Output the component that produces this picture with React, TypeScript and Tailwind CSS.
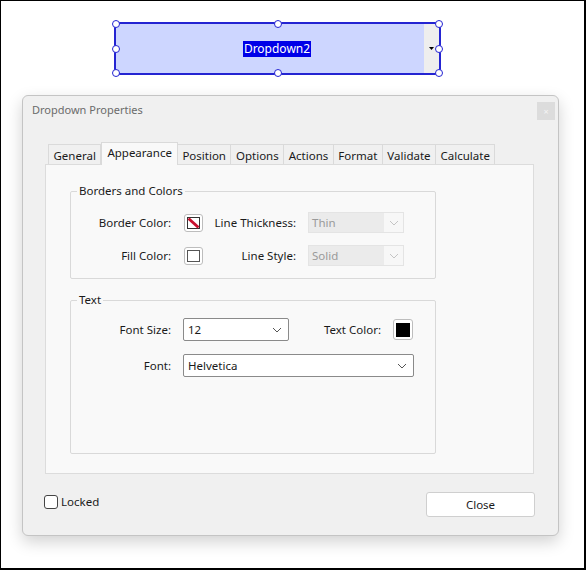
import React from 'react';

const TABS = ['General', 'Appearance', 'Position', 'Options', 'Actions', 'Format', 'Validate', 'Calculate'];

const HANDLES: [string, string][] = [
  ['left-0', 'top-0'],
  ['left-1/2', 'top-0'],
  ['left-full', 'top-0'],
  ['left-0', 'top-1/2'],
  ['left-full', 'top-1/2'],
  ['left-0', 'top-full'],
  ['left-1/2', 'top-full'],
  ['left-full', 'top-full'],
];

const Chevron: React.FC<{ light?: boolean }> = ({ light }) => (
  <svg width="10" height="6" viewBox="0 0 10 6" className={light ? 'text-[#c4c4c4]' : 'text-[#555]'}>
    <path d="M1 1l4 4 4-4" fill="none" stroke="currentColor" strokeWidth="1" />
  </svg>
);

const Select: React.FC<{ value: string; width: string; disabled?: boolean }> = ({ value, width, disabled }) =>
  disabled ? (
    <div className={`${width} flex h-[21px] items-center border border-[#e4e4e4] bg-[#f7f7f7]`}>
      <div className="flex h-full flex-1 items-center bg-[#ebebeb] pl-[3px] text-[#9a9a9a]">{value}</div>
      <div className="flex w-[19px] justify-center">
        <Chevron light />
      </div>
    </div>
  ) : (
    <div className={`${width} flex h-[23px] items-center justify-between rounded-[2px] border border-[#8a8a8a] bg-white pl-[4px] pr-[6px]`}>
      <span>{value}</span>
      <Chevron />
    </div>
  );

const Swatch: React.FC<{ kind: 'none' | 'white' }> = ({ kind }) => (
  <div className="flex h-[18px] w-[19px] items-center justify-center rounded-[3px] border border-[#bdbdbd] bg-white">
    {kind === 'none' ? (
      <svg width="13" height="12" viewBox="0 0 13 12">
        <rect x="0.5" y="0.5" width="12" height="11" fill="#fff" stroke="#333" />
        <path d="M1.5 1.5l10 9" stroke="#c8102e" strokeWidth="3" />
      </svg>
    ) : (
      <div className="h-[12px] w-[13px] border border-[#555] bg-white" />
    )}
  </div>
);

const Group: React.FC<{ title: string; className: string; children: React.ReactNode }> = ({ title, className, children }) => (
  <fieldset className={`${className} rounded-[2px] border border-[#d9d9d9]`}>
    <legend className="ml-[6px] px-[2px] leading-[14px]">{title}</legend>
    {children}
  </fieldset>
);

export default function App() {
  return (
    <div
      className="h-[570px] w-[586px] overflow-hidden border-l border-t border-r-2 border-b-2 border-black bg-white text-[11.5px] text-[#1a1a1a]"
      style={{ fontFamily: '"Noto Sans", "Open Sans", sans-serif' }}
    >
      {/* selected dropdown field */}
      <div className="relative ml-[113px] mt-[21px] h-[53px] w-[327px] border-2 border-[#2424d2] bg-[#cdd6ff]">
        <div className="flex h-full">
          <div className="flex flex-1 items-center justify-center pl-[14px]">
            <span className="bg-[#0000e8] px-px text-[12px] leading-[16px] text-white">Dropdown2</span>
          </div>
          <div className="flex w-[15px] items-center justify-center bg-[#eeeeee]">
            <svg width="5" height="3" viewBox="0 0 5 3">
              <path d="M0 0h5L2.5 3z" fill="#000" />
            </svg>
          </div>
        </div>
        {HANDLES.map(([x, y]) => (
          <span
            key={x + y}
            className={`absolute ${x} ${y} h-[8px] w-[8px] -translate-x-1/2 -translate-y-1/2 rounded-full border-[1.5px] border-[#2424d2] bg-white`}
          />
        ))}
      </div>

      {/* properties dialog */}
      <div className="ml-[21px] mt-[20px] h-[441px] w-[537px] rounded-[6px] border border-[#c4c4c4] bg-[#f0f0f0] shadow-[0_6px_16px_rgba(0,0,0,0.18)]">
        <div className="flex items-start justify-between pl-[9px] pr-[3px] pt-[6px]">
          <span className="text-[11px] text-[#6b6b6b]">Dropdown Properties</span>
          <div className="flex h-[18px] w-[18px] items-center justify-center bg-[#dcdcdc] text-[9px] leading-none text-[#f5f5f5]">×</div>
        </div>

        <div className="ml-[22px] mt-[22px] w-[489px]">
          <div className="flex items-end pl-[3px]">
            {TABS.map((t) =>
              t === 'Appearance' ? (
                <div key={t} className="-mb-px h-[23px] border border-b-0 border-[#dadada] bg-[#f9f9f9] px-[5px] pt-[1px]">
                  {t}
                </div>
              ) : (
                <div key={t} className="-ml-px h-[20px] border border-b-0 border-[#dadada] bg-[#f0f0f0] px-[4.5px] pt-[2px] first:ml-0">
                  {t}
                </div>
              ),
            )}
          </div>

          <div className="flex h-[310px] flex-col gap-[14px] border border-[#dcdcdc] bg-[#f9f9f9] px-[24px] pt-[19px]">
            <Group title="Borders and Colors" className="h-[95px] w-[366px]">
              <div className="mt-[14px] flex flex-col gap-[12px]">
                <div className="flex items-center">
                  <span className="w-[100px] text-right">Border Color:</span>
                  <div className="ml-[13px]">
                    <Swatch kind="none" />
                  </div>
                  <span className="w-[93px] text-right">Line Thickness:</span>
                  <div className="ml-[12px]">
                    <Select value="Thin" width="w-[96px]" disabled />
                  </div>
                </div>
                <div className="flex items-center">
                  <span className="w-[100px] text-right">Fill Color:</span>
                  <div className="ml-[13px]">
                    <Swatch kind="white" />
                  </div>
                  <span className="w-[93px] text-right">Line Style:</span>
                  <div className="ml-[12px]">
                    <Select value="Solid" width="w-[96px]" disabled />
                  </div>
                </div>
              </div>
            </Group>

            <Group title="Text" className="h-[161px] w-[366px]">
              <div className="mt-[11px] flex flex-col gap-[13px]">
                <div className="flex items-center">
                  <span className="w-[100px] text-right">Font Size:</span>
                  <div className="ml-[12px]">
                    <Select value="12" width="w-[106px]" />
                  </div>
                  <span className="w-[92px] text-right">Text Color:</span>
                  <div className="ml-[12px]">
                    <div className="flex h-[21px] w-[20px] items-center justify-center rounded-[3px] border border-[#bdbdbd] bg-white">
                      <div className="h-[14px] w-[14px] bg-black" />
                    </div>
                  </div>
                </div>
                <div className="flex items-center">
                  <span className="w-[100px] text-right">Font:</span>
                  <div className="ml-[12px]">
                    <Select value="Helvetica" width="w-[231px]" />
                  </div>
                </div>
              </div>
            </Group>
          </div>
        </div>

        <div className="ml-[21px] mr-[23px] mt-[18px] flex items-start justify-between">
          <label className="mt-px flex items-center gap-[3px]">
            <span className="h-[14px] w-[14px] rounded-[3px] border border-[#444] bg-white" />
            <span>Locked</span>
          </label>
          <button className="h-[25px] w-[109px] rounded-[3px] border border-[#cfcfcf] bg-white">Close</button>
        </div>
      </div>
    </div>
  );
}
